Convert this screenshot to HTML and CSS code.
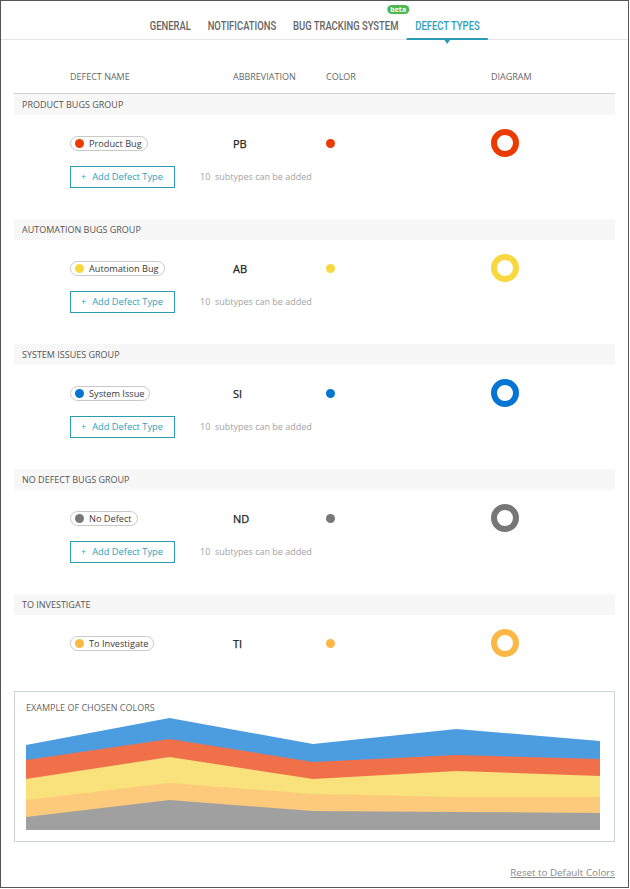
FILE: index.html
```html
<!DOCTYPE html>
<html>
<head>
<meta charset="utf-8">
<link rel="stylesheet" href="styles.css">
</head>
<body>
<div class="page">
  <nav class="tabs">
    <div class="tabs-inner">
      <a class="tab"><span class="tab-label">GENERAL</span></a>
      <a class="tab"><span class="tab-label">NOTIFICATIONS</span></a>
      <a class="tab"><span class="tab-label">BUG TRACKING SYSTEM<span class="badge">beta</span></span></a>
      <a class="tab active"><span class="tab-label">DEFECT TYPES</span></a>
    </div>
  </nav>

  <main class="content">
    <div class="table-head">
      <span>DEFECT NAME</span>
      <span>ABBREVIATION</span>
      <span>COLOR</span>
      <span>DIAGRAM</span>
    </div>

    <section class="group">
      <div class="group-title">PRODUCT BUGS GROUP</div>
      <div class="defect-row">
        <span class="pill"><i class="dot c-pb"></i>Product Bug</span>
        <span class="abbr">PB</span>
        <span><i class="swatch c-pb"></i></span>
        <span><i class="donut b-pb"></i></span>
      </div>
      <div class="add-row">
        <button class="add-btn"><span class="plus">+</span>Add Defect Type</button>
        <span class="hint">10&nbsp; subtypes can be added</span>
      </div>
    </section>

    <section class="group">
      <div class="group-title">AUTOMATION BUGS GROUP</div>
      <div class="defect-row">
        <span class="pill"><i class="dot c-ab"></i>Automation Bug</span>
        <span class="abbr">AB</span>
        <span><i class="swatch c-ab"></i></span>
        <span><i class="donut b-ab"></i></span>
      </div>
      <div class="add-row">
        <button class="add-btn"><span class="plus">+</span>Add Defect Type</button>
        <span class="hint">10&nbsp; subtypes can be added</span>
      </div>
    </section>

    <section class="group">
      <div class="group-title">SYSTEM ISSUES GROUP</div>
      <div class="defect-row">
        <span class="pill"><i class="dot c-si"></i>System Issue</span>
        <span class="abbr">SI</span>
        <span><i class="swatch c-si"></i></span>
        <span><i class="donut b-si"></i></span>
      </div>
      <div class="add-row">
        <button class="add-btn"><span class="plus">+</span>Add Defect Type</button>
        <span class="hint">10&nbsp; subtypes can be added</span>
      </div>
    </section>

    <section class="group">
      <div class="group-title">NO DEFECT BUGS GROUP</div>
      <div class="defect-row">
        <span class="pill"><i class="dot c-nd"></i>No Defect</span>
        <span class="abbr">ND</span>
        <span><i class="swatch c-nd"></i></span>
        <span><i class="donut b-nd"></i></span>
      </div>
      <div class="add-row">
        <button class="add-btn"><span class="plus">+</span>Add Defect Type</button>
        <span class="hint">10&nbsp; subtypes can be added</span>
      </div>
    </section>

    <section class="group group-last">
      <div class="group-title">TO INVESTIGATE</div>
      <div class="defect-row">
        <span class="pill"><i class="dot c-ti"></i>To Investigate</span>
        <span class="abbr">TI</span>
        <span><i class="swatch c-ti"></i></span>
        <span><i class="donut b-ti"></i></span>
      </div>
    </section>

    <div class="chart-box">
      <div class="chart-title">EXAMPLE OF CHOSEN COLORS</div>
      <svg class="chart" width="574" height="114" viewBox="0 0 574 114">
        <polygon fill="#4c9de0" points="0,29 143.5,2 287,28 430.5,13 574,25 574,114 0,114"/>
        <polygon fill="#f0704a" points="0,44 143.5,23 287,46 430.5,39 574,43 574,114 0,114"/>
        <polygon fill="#f9e17b" points="0,63 143.5,41 287,63 430.5,55 574,60 574,114 0,114"/>
        <polygon fill="#fdc97a" points="0,84 143.5,67 287,78 430.5,81 574,81 574,114 0,114"/>
        <polygon fill="#a0a0a0" points="0,101 143.5,84 287,95 430.5,96 574,97 574,114 0,114"/>
      </svg>
    </div>

    <div class="reset-row"><a class="reset">Reset to Default Colors</a></div>
  </main>
</div>
</body>
</html>
```

FILE: styles.css
```css
* { box-sizing: border-box; }

html, body {
  margin: 0;
  padding: 0;
  background: #ffffff;
}

body {
  font-family: "Open Sans", "Liberation Sans", sans-serif;
  color: #444;
}

.page {
  width: 629px;
  height: 888px;
  border: 1px solid #555555;
  background: #ffffff;
  overflow: hidden;
}

/* ---------- tabs ---------- */
.tabs {
  height: 39px;
  border-bottom: 1px solid #e4e4e4;
  display: flex;
  justify-content: center;
}

.tabs-inner {
  display: flex;
  align-items: flex-start;
  transform: scaleX(0.7);
  transform-origin: center top;
}

.tab {
  position: relative;
  display: block;
  height: 39px;
  padding: 16px 12px 0;
  font-family: Roboto, "Liberation Sans", sans-serif;
  font-size: 13.5px;
  font-weight: 500;
  line-height: 16px;
  color: #666666;
  white-space: nowrap;
  border-bottom: 2px solid transparent;
}

.tab-label {
  position: relative;
  display: inline-block;
}

.tab.active {
  color: #2c9fbd;
  border-bottom-color: #2a9bb2;
}

.tab.active::after {
  content: "";
  position: absolute;
  left: 50%;
  top: 100%;
  margin-top: 2px;
  transform: translateX(-50%);
  border-left: 4px solid transparent;
  border-right: 4px solid transparent;
  border-top: 4px solid #2a9bb2;
}

.badge {
  position: absolute;
  left: 100%;
  top: -12px;
  height: 9px;
  padding: 0 3px;
  border-radius: 5px;
  background: #4cb84f;
  color: #ffffff;
  font-family: "Open Sans", sans-serif;
  font-size: 7px;
  font-weight: 700;
  line-height: 9px;
  transform: translateX(-50%) scaleX(1.428);
}

/* ---------- table ---------- */
.content {
  padding: 0 13px;
}

.table-head,
.defect-row {
  display: grid;
  grid-template-columns: 163px 93px 165px 1fr;
  padding-left: 56px;
  align-items: center;
}

.table-head {
  margin-top: 30px;
  padding-bottom: 9px;
  font-size: 9px;
  line-height: 14px;
  color: #666;
  border-bottom: 1px solid #d2d2d2;
}

.group {
  padding-bottom: 31px;
}

.group-last {
  padding-bottom: 34px;
}

.group-title {
  height: 21px;
  padding-left: 8px;
  background: #f7f7f7;
  font-size: 9px;
  line-height: 21px;
  color: #555;
}

.defect-row {
  margin-top: 14px;
  height: 28px;
}

.pill {
  justify-self: start;
  display: inline-flex;
  align-items: center;
  gap: 5px;
  height: 15px;
  padding: 0 5px 0 4px;
  border: 1px solid #c9c9c9;
  border-radius: 8px;
  font-size: 9.2px;
  color: #3a3a3a;
  white-space: nowrap;
}

.dot,
.swatch {
  display: block;
  width: 9px;
  height: 9px;
  border-radius: 50%;
}

.abbr {
  font-size: 11px;
  color: #222;
  -webkit-text-stroke: 0.25px #222;
}

.donut {
  display: block;
  width: 28px;
  height: 28px;
  border-radius: 50%;
  border: 6.5px solid #777;
}

.c-pb { background: #ec3b00; }
.c-ab { background: #f7d83e; }
.c-si { background: #0575d3; }
.c-nd { background: #777777; }
.c-ti { background: #fdb746; }

.b-pb { border-color: #ec3b00; }
.b-ab { border-color: #f7d83e; }
.b-si { border-color: #0575d3; }
.b-nd { border-color: #777777; }
.b-ti { border-color: #fdb746; }

.add-row {
  display: flex;
  align-items: center;
  margin-top: 9px;
  padding-left: 56px;
  height: 22px;
}

.add-btn {
  display: flex;
  align-items: center;
  width: 105px;
  height: 22px;
  padding: 0 0 1px 10px;
  margin: 0;
  border: 1px solid #2a9bb0;
  background: #ffffff;
  color: #2c9fbd;
  font-family: "Open Sans", sans-serif;
  font-size: 9.3px;
  white-space: nowrap;
}

.plus {
  margin-right: 6px;
  font-size: 9px;
}

.hint {
  margin-left: 25px;
  padding-bottom: 1px;
  font-size: 9px;
  color: #a3a3a3;
}

/* ---------- chart ---------- */
.chart-box {
  border: 1px solid #cbd3d6;
  padding: 10px 13px 11px 11px;
}

.chart-title {
  font-size: 9px;
  line-height: 12px;
  color: #666;
  margin-bottom: 2px;
}

.chart {
  display: block;
}

.reset-row {
  display: flex;
  justify-content: flex-end;
  margin-top: 24px;
}

.reset {
  font-size: 9.8px;
  line-height: 14px;
  color: #8a8a8a;
  text-decoration: underline;
}
```
